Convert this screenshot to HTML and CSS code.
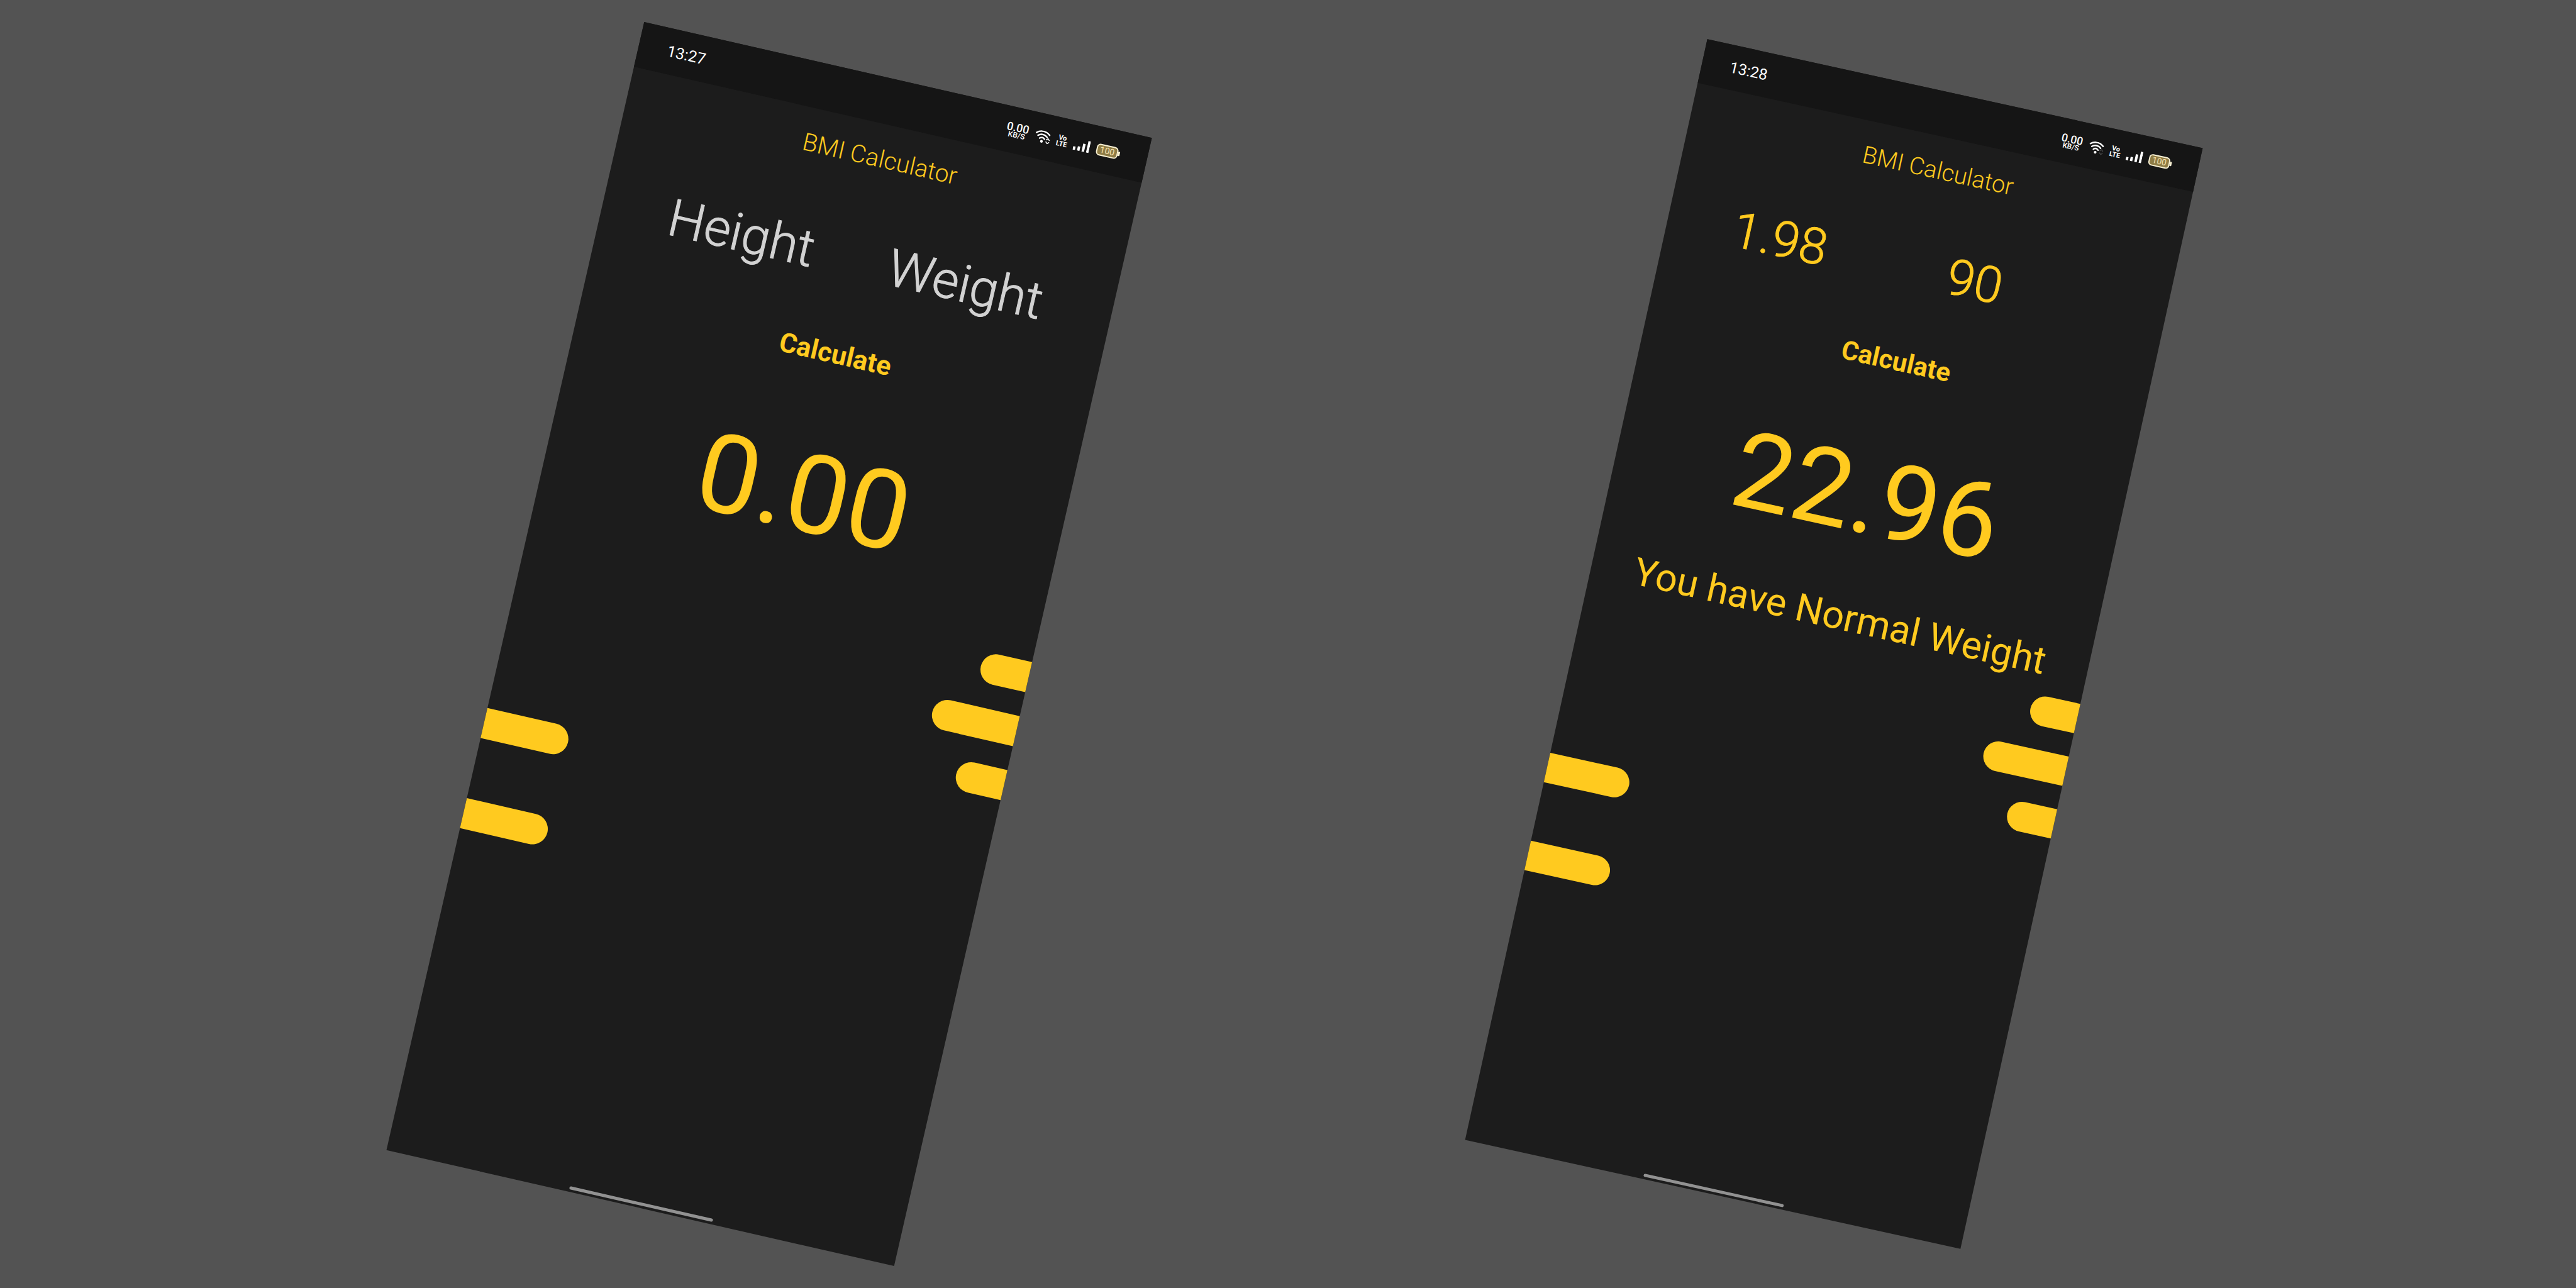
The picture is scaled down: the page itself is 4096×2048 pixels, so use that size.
FILE: index.html
```html
<!DOCTYPE html>
<html lang="en">
<head>
<meta charset="utf-8">
<meta name="viewport" content="width=device-width, initial-scale=1">
<title>BMI Calculator</title>
<link rel="stylesheet" href="styles.css">
</head>
<body>
<svg class="sprite" width="0" height="0" aria-hidden="true">
  <symbol id="wifi" viewBox="0 0 25 20">
    <g fill="none" stroke="#fff" stroke-width="2.4" stroke-linecap="round">
      <path d="M1.3 5.2C7.600 -.3 16.400 -.3 22.700 5.200"/>
      <path d="M4.600 9.200C9 5.200 15 5.200 19.400 9.200"/>
      <path d="M8 13C10.400 10.700 13.600 10.700 16 13"/>
    </g>
    <circle cx="12" cy="17.300" r="2.200" fill="#fff"/>
  </symbol>
  <symbol id="traffic" viewBox="0 0 7 10">
    <path d="M1.200 4V3.200L3.500 1 5.800 3.200V4M1.200 6V6.800L3.500 9 5.800 6.800V6" fill="none" stroke="currentColor" stroke-width="1.500"/>
  </symbol>
  <symbol id="signal" viewBox="0 0 26 19">
    <path d="M0 13.500h4V19H0zM7.300 12h4v7h-4zM14.700 6h4v13h-4zM22 0h4v19h-4z" fill="#fff"/>
  </symbol>
</svg>
<main class="stage">
  <section class="phone">
    <header class="status">
      <time class="clock">13:27</time>
      <div class="indicators">
        <div class="speed"><span class="rate">0.00</span><span class="unit">KB/S</span></div>
        <div class="wifi"><svg class="wifi-icon"><use href="#wifi"/></svg><svg class="traffic"><use href="#traffic"/></svg></div>
        <div class="volte"><span>Vo</span><span>LTE</span></div>
        <svg class="signal"><use href="#signal"/></svg>
        <div class="battery">100</div>
      </div>
    </header>
    <h1 class="title">BMI Calculator</h1>
    <form class="form">
      <div class="fields">
        <input class="field" type="text" inputmode="decimal" placeholder="Height" aria-label="Height">
        <input class="field" type="text" inputmode="decimal" placeholder="Weight" aria-label="Weight">
      </div>
      <button class="calculate" type="button">Calculate</button>
    </form>
    <output class="result">0.00</output>
    <div class="bars">
      <div class="bars-left"><i class="bar"></i><i class="bar"></i></div>
      <div class="bars-right"><i class="bar short"></i><i class="bar"></i><i class="bar short"></i></div>
    </div>
    <div class="home"></div>
  </section>

  <section class="phone phone-small">
    <header class="status">
      <time class="clock">13:28</time>
      <div class="indicators">
        <div class="speed"><span class="rate">0.00</span><span class="unit">KB/S</span></div>
        <div class="wifi"><svg class="wifi-icon"><use href="#wifi"/></svg><svg class="traffic idle"><use href="#traffic"/></svg></div>
        <div class="volte"><span>Vo</span><span>LTE</span></div>
        <svg class="signal"><use href="#signal"/></svg>
        <div class="battery">100</div>
      </div>
    </header>
    <h1 class="title">BMI Calculator</h1>
    <form class="form">
      <div class="fields">
        <input class="field" type="text" inputmode="decimal" placeholder="Height" aria-label="Height" value="1.98">
        <input class="field" type="text" inputmode="decimal" placeholder="Weight" aria-label="Weight" value="90">
      </div>
      <button class="calculate" type="button">Calculate</button>
    </form>
    <output class="result">22.96</output>
    <p class="message">You have Normal Weight</p>
    <div class="bars">
      <div class="bars-left"><i class="bar"></i><i class="bar"></i></div>
      <div class="bars-right"><i class="bar short"></i><i class="bar"></i><i class="bar short"></i></div>
    </div>
    <div class="home"></div>
  </section>
</main>
</body>
</html>
```

FILE: styles.css
```css
:root {
  --yellow: #ffca1f;
  --screen: #1c1c1c;
}

* {
  box-sizing: border-box;
}

body {
  margin: 0;
  background: #535353;
  color: var(--yellow);
  font-family: Roboto, sans-serif;
}

.sprite {
  position: absolute;
}

.stage {
  display: flex;
  justify-content: space-between;
  align-items: center;
  min-height: 100vh;
  padding: 0 18.7vw 0 19.75vw;
  overflow: hidden;
}

.phone {
  display: flex;
  flex-direction: column;
  flex: none;
  width: 828px;
  min-height: 1840px;
  background: var(--screen);
  transform: rotate(12.87deg);
}

.phone-small {
  transform: rotate(12.41deg) scale(.974);
}

/* Status bar */
.status {
  display: flex;
  justify-content: space-between;
  align-items: center;
  height: 73px;
  padding: 0 44px 0 46px;
  background: #151515;
  color: #fff;
}

.clock {
  font-size: 25px;
  line-height: 30px;
}

.indicators {
  display: flex;
  align-items: center;
  gap: 11px;
}

.speed,
.volte {
  display: flex;
  flex-direction: column;
  align-items: center;
  font-weight: 500;
}

.rate {
  font-size: 18px;
  line-height: 15px;
}

.unit {
  font-size: 12px;
  line-height: 10px;
}

.wifi {
  position: relative;
  width: 25px;
  height: 20px;
}

.wifi-icon {
  display: block;
  width: 25px;
  height: 20px;
}

.traffic {
  position: absolute;
  right: 0;
  bottom: 0;
  width: 7px;
  height: 10px;
}

.idle {
  color: #444;
}

.volte {
  width: 16px;
  font-size: 11px;
  font-weight: 700;
  line-height: 10px;
}

.signal {
  width: 26px;
  height: 19px;
}

.battery {
  position: relative;
  width: 35px;
  height: 19px;
  margin-right: 3px;
  border: 2px solid #f8f0d2;
  border-radius: 6px;
  background: #8e7c45;
  color: #fbe3b0;
  font-size: 14px;
  line-height: 15px;
  text-align: center;
}

.battery::after {
  content: "";
  position: absolute;
  top: 4px;
  right: -5px;
  width: 3px;
  height: 7px;
  border-radius: 0 1px 1px 0;
  background: #f8f0d2;
}

/* Calculator */
.title {
  margin: 34px 0 0;
  font-size: 39px;
  font-weight: 300;
  line-height: 45px;
  text-align: center;
}

.form {
  display: flex;
  flex-direction: column;
  align-items: center;
}

.fields {
  display: flex;
  justify-content: space-between;
  align-self: stretch;
  margin-top: 92px;
  padding: 0 108px;
}

.field {
  width: 254px;
  height: 98px;
  padding: 0;
  border: 0;
  outline: 0;
  background: none;
  color: var(--yellow);
  font: 300 82px/98px Roboto, sans-serif;
  -webkit-text-stroke: 1px;
}

.field::placeholder {
  color: #d2d2d2;
  opacity: 1;
}

.calculate {
  margin-top: 81px;
  padding: 0;
  border: 0;
  background: none;
  color: var(--yellow);
  font: 700 43px/49px Roboto, sans-serif;
}

.result {
  margin-top: 102px;
  margin-bottom: 63px;
  font-size: 175px;
  line-height: 200px;
  text-align: center;
}

.message {
  margin: 0;
  font-size: 63px;
  line-height: 74px;
  text-align: center;
}

/* Decorative side bars */
.bars {
  display: flex;
  justify-content: space-between;
  margin-top: 18px;
}

.bars-left,
.bars-right {
  display: flex;
  flex-direction: column;
}

.bars-left {
  gap: 98px;
  padding-top: 264px;
}

.bars-right {
  align-items: flex-end;
  gap: 39px;
}

.bar {
  width: 137px;
  height: 49px;
  background: var(--yellow);
}

.short {
  width: 78px;
}

.bars-left .bar {
  border-radius: 0 25px 25px 0;
}

.bars-right .bar {
  border-radius: 25px 0 0 25px;
}

.home {
  align-self: center;
  width: 234px;
  height: 5px;
  margin: auto 0 4px;
  border-radius: 3px;
  background: #929292;
}
```
